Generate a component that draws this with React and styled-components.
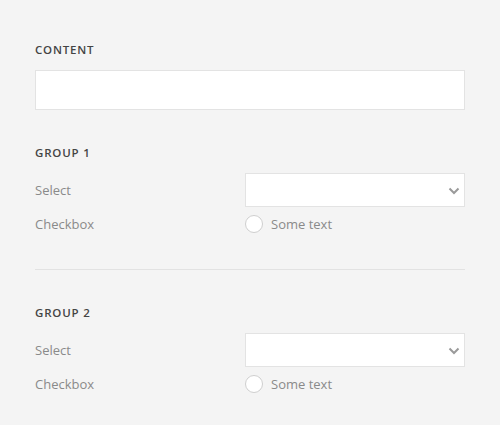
import React from "react"
import styled, { createGlobalStyle } from "styled-components"

const GlobalStyle = createGlobalStyle`
  html, body {
    margin: 0;
    padding: 0;
    background: #f4f4f4;
  }
  * {
    box-sizing: border-box;
  }
`

const Page = styled.main`
  padding: 43px 35px 0;
  font-family: "Open Sans", "Liberation Sans", sans-serif;
`

const Section = styled.section`
  padding-bottom: 36px;
  border-bottom: ${(p) => (p.$divided ? "1px solid #e2e2e2" : "none")};
  & + & {
    padding-top: 36px;
  }
  &:first-child + & {
    padding-top: 0;
  }
  &:last-child {
    padding-bottom: 0;
  }
`

const Heading = styled.h4`
  margin: 0 0 ${(p) => p.$gap || 13}px;
  font-family: "Open Sans", "Liberation Sans", sans-serif;
  font-weight: 600;
  font-size: 11.5px;
  line-height: 14px;
  letter-spacing: 0.8px;
  color: #444;
  text-transform: uppercase;
`

const TextInput = styled.input`
  display: block;
  width: 100%;
  height: 40px;
  background: #fff;
  border: 1px solid #e3e3e3;
  outline: none;
  padding: 0 10px;
  font: inherit;
`

const Fields = styled.div`
  display: grid;
  grid-template-columns: 210px 1fr;
  row-gap: 8px;
  align-items: center;
`

const Label = styled.span`
  font-size: 13px;
  line-height: 18px;
  color: #8a8a8a;
`

const SelectWrap = styled.div`
  position: relative;
  height: 34px;
`

const SelectBox = styled.select`
  appearance: none;
  display: block;
  width: 100%;
  height: 34px;
  background: #fff;
  border: 1px solid #e3e3e3;
  border-radius: 0;
  outline: none;
  font: inherit;
  font-size: 13px;
  color: #666;
`

const Chevron = styled.svg`
  position: absolute;
  right: 5px;
  top: 14px;
  pointer-events: none;
`

const RadioRow = styled.label`
  display: flex;
  align-items: center;
  gap: 8px;
  font-size: 13px;
  line-height: 18px;
  color: #8a8a8a;
`

const Circle = styled.span`
  width: 18px;
  height: 18px;
  border-radius: 50%;
  background: #fff;
  border: 1px solid #cfcfcf;
  flex: none;
`

const Group = ({ title, divided }) => (
  <Section $divided={divided}>
    <Heading>{title}</Heading>
    <Fields>
      <Label>Select</Label>
      <SelectWrap>
        <SelectBox defaultValue="">
          <option value=""></option>
        </SelectBox>
        <Chevron width="12" height="8" viewBox="0 0 12 8">
          <path d="M1.5 1.5 L6 6 L10.5 1.5" fill="none" stroke="#9a9a9a" strokeWidth="2" />
        </Chevron>
      </SelectWrap>
      <Label>Checkbox</Label>
      <RadioRow>
        <Circle />
        Some text
      </RadioRow>
    </Fields>
  </Section>
)

const App = () => {
  return (
    <Page>
      <GlobalStyle />
      <Section>
        <Heading $gap={13}>Content</Heading>
        <TextInput />
      </Section>
      <Group title="Group 1" divided />
      <Group title="Group 2" />
    </Page>
  )
}

export default App
